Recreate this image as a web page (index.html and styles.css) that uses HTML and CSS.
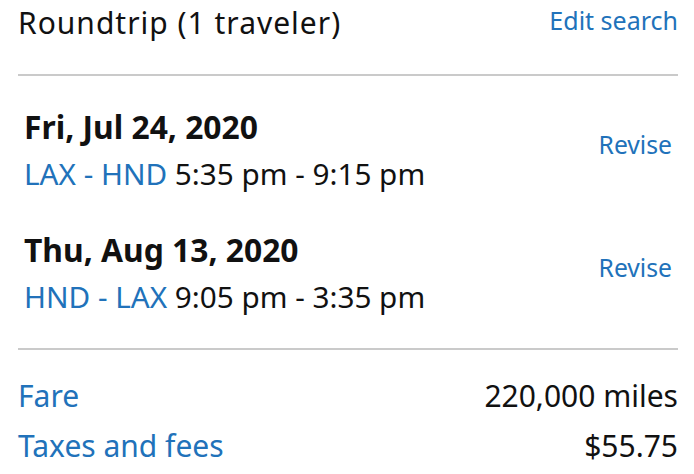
FILE: index.html
```html
<!DOCTYPE html>
<html lang="en">
<head>
<meta charset="utf-8">
<title>Trip summary</title>
<link rel="stylesheet" href="styles.css">
</head>
<body>
<main class="summary">
  <header class="summary-header">
    <h1 class="trip-title">Roundtrip (1 traveler)</h1>
    <a class="link edit-link" href="#">Edit search</a>
  </header>
  <hr class="divider">
  <section class="segments">
    <div class="segment">
      <div class="segment-info">
        <div class="segment-date">Fri, Jul 24, 2020</div>
        <div class="segment-route"><span class="route-code">LAX - HND</span> 5:35 pm - 9:15 pm</div>
      </div>
      <a class="link revise-link" href="#">Revise</a>
    </div>
    <div class="segment">
      <div class="segment-info">
        <div class="segment-date">Thu, Aug 13, 2020</div>
        <div class="segment-route"><span class="route-code">HND - LAX</span> 9:05 pm - 3:35 pm</div>
      </div>
      <a class="link revise-link" href="#">Revise</a>
    </div>
  </section>
  <hr class="divider">
  <section class="costs">
    <div class="cost-row"><a class="link cost-label" href="#">Fare</a><span class="cost-value">220,000 miles</span></div>
    <div class="cost-row"><a class="link cost-label" href="#">Taxes and fees</a><span class="cost-value">$55.75</span></div>
  </section>
</main>
</body>
</html>
```
FILE: styles.css
```css
* { box-sizing: border-box; }
html, body { margin: 0; padding: 0; background: #fff; }
body {
  font-family: "Noto Sans", "Open Sans", sans-serif;
  color: #111;
}
.summary { padding: 0 16px 0 18px; }
.link { color: #2172ba; text-decoration: none; }

.summary-header {
  display: flex;
  justify-content: space-between;
  align-items: flex-start;
  padding-top: 3px;
  padding-bottom: 31px;
}
.trip-title {
  margin: 0;
  font-size: 30px;
  font-weight: 400;
  line-height: 40px;
  letter-spacing: 1px;
}
.edit-link {
  font-size: 25px;
  line-height: 32px;
  margin-top: 1px;
}
.divider {
  margin: 0;
  border: 0;
  height: 2px;
  background: #cacaca;
}
.segments {
  padding-top: 27px;
  padding-bottom: 27px;
  display: flex;
  flex-direction: column;
  gap: 28px;
}
.segment {
  display: flex;
  justify-content: space-between;
  align-items: flex-start;
  padding: 0 6px;
}
.segment-date {
  font-size: 31.8px;
  font-weight: 700;
  line-height: 47px;
}
.segment-route {
  font-size: 29.7px;
  line-height: 48px;
}
.route-code { color: #2172ba; }
.revise-link {
  font-size: 24.7px;
  line-height: 32px;
  margin-top: 26px;
}
.costs { padding-top: 21px; }
.cost-row {
  display: flex;
  justify-content: space-between;
  font-size: 30px;
  line-height: 50px;
}
```
